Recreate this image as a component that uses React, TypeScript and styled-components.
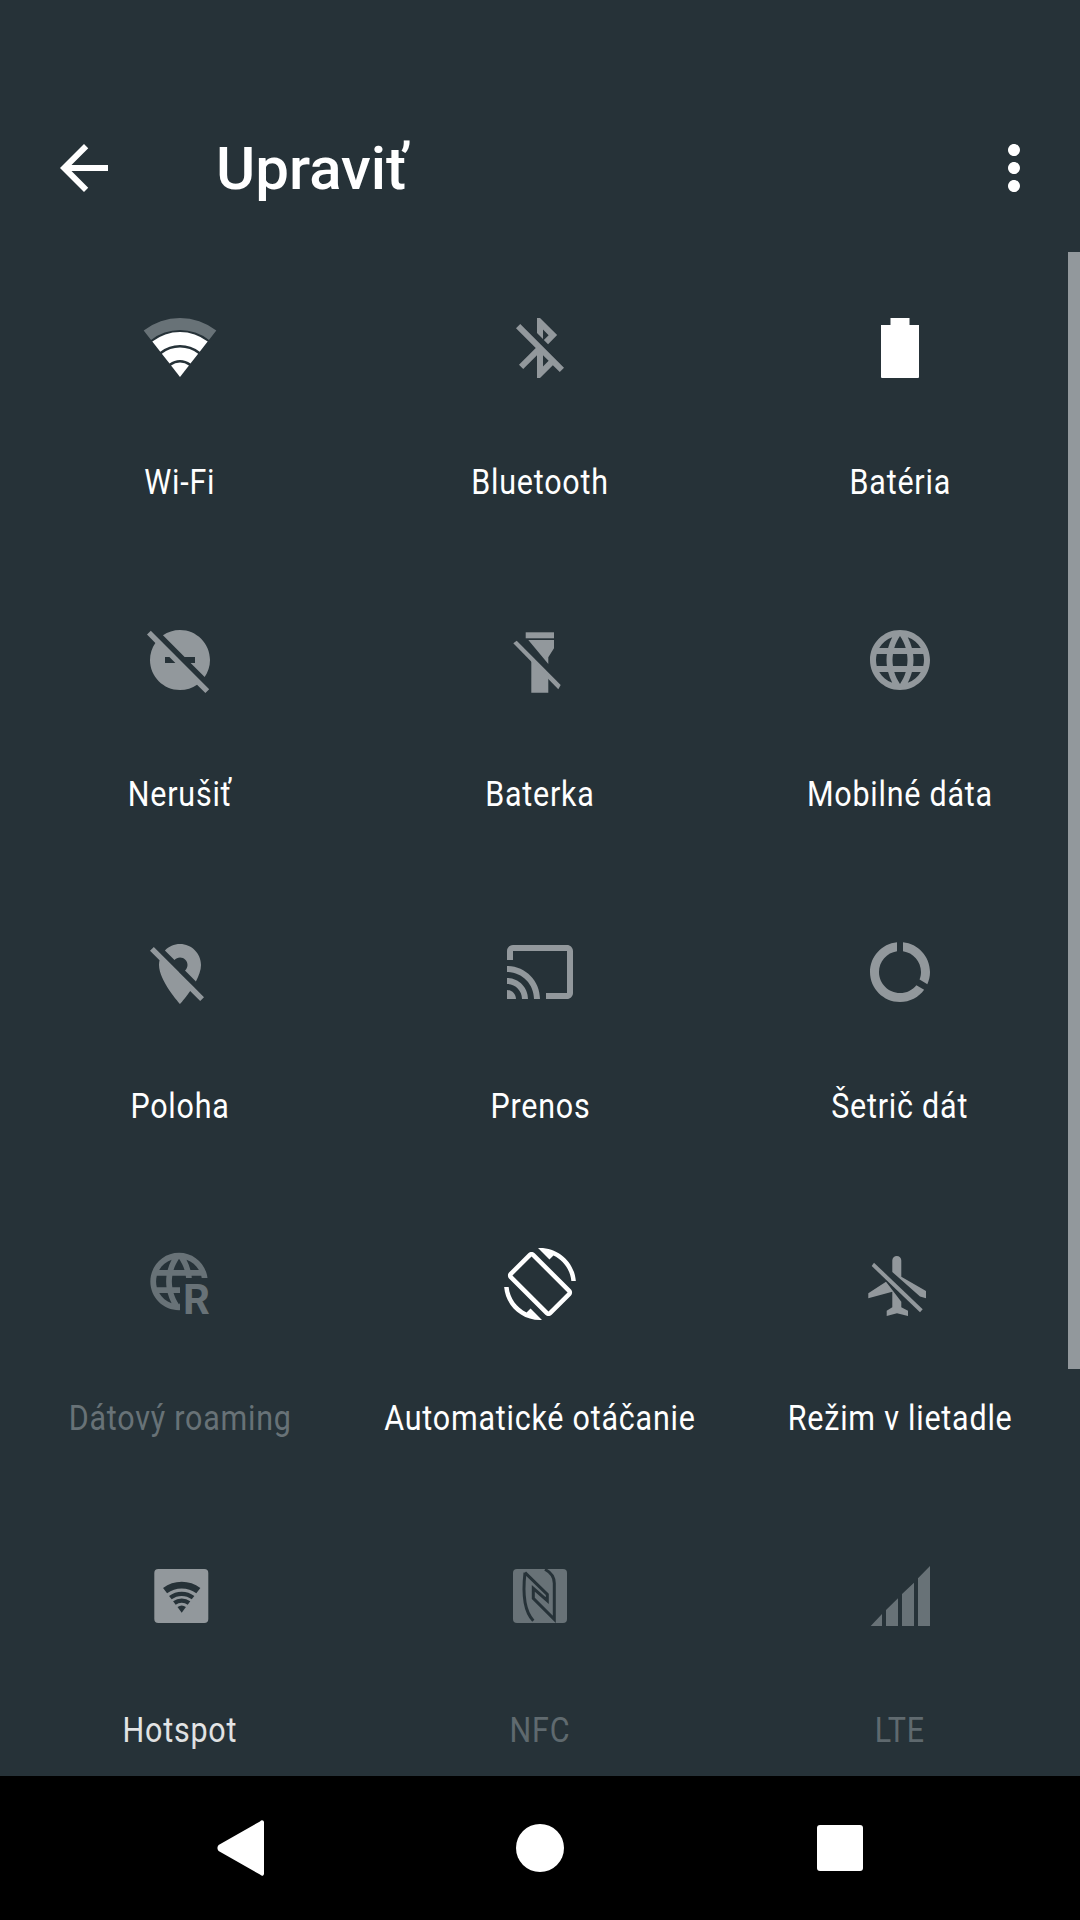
import React from 'react';
import styled, { createGlobalStyle } from 'styled-components';

const Global = createGlobalStyle`
  html, body { margin: 0; padding: 0; background: #263238; }
  * { box-sizing: border-box; }
`;

const Screen = styled.div`
  position: relative;
  width: 1080px;
  height: 1920px;
  display: flex;
  flex-direction: column;
  background: #263238;
  overflow: hidden;
  font-family: Roboto, "Noto Sans", sans-serif;
`;

const Toolbar = styled.header`
  flex: none;
  height: 252px;
  padding: 84px 30px 0 48px;
  display: flex;
  align-items: flex-start;
`;

const BarIcon = styled.svg`
  flex: none;
  width: 72px;
  height: 72px;
  margin-top: 48px;
  fill: #fff;
`;

const Title = styled.h1`
  flex: 1;
  margin: 49px 0 0 96px;
  color: #fff;
  font-size: 60px;
  line-height: 72px;
  font-weight: 500;
`;

const Tiles = styled.main`
  position: relative;
  flex: 1;
  min-height: 0;
  overflow: hidden;
  display: grid;
  grid-template-columns: repeat(3, 360px);
  grid-auto-rows: 312px;
  &::after {
    content: '';
    position: absolute;
    left: 0;
    right: 0;
    bottom: 0;
    height: 140px;
    background: linear-gradient(rgba(38, 50, 56, 0), rgba(38, 50, 56, 0.2));
  }
`;

const Tile = styled.div<{ $off?: boolean }>`
  display: flex;
  flex-direction: column;
  align-items: center;
  padding-top: 60px;
  color: ${(p) => (p.$off ? '#687277' : '#fff')};
`;

const TileIcon = styled.svg<{ $tone: string }>`
  flex: none;
  width: 72px;
  height: 72px;
  margin-bottom: 77px;
  overflow: visible;
  fill: ${(p) => p.$tone};
`;

const Label = styled.span`
  display: block;
  white-space: nowrap;
  font-size: 35px;
  line-height: 44px;
  letter-spacing: 0.9px;
  transform: scaleX(0.87);
`;

const ScrollThumb = styled.div`
  position: absolute;
  right: 0;
  top: 252px;
  width: 12px;
  height: 1117px;
  background: #92989c;
`;

const NavBar = styled.nav`
  flex: none;
  height: 144px;
  background: #000;
  display: grid;
  grid-template-columns: repeat(3, 300px);
  justify-content: center;
  align-items: center;
  position: relative;
  z-index: 1;
`;

const NavSlot = styled.div`
  display: flex;
  justify-content: center;
  align-items: center;
`;

const NavGlyph = styled.svg`
  width: 72px;
  height: 72px;
  fill: #fff;
`;

const WHITE = '#fff';
const GREY = '#92989c';
const DIM = '#687277';
const BG = '#263238';

function band(cx: number, cy: number, ro: number, ri: number, half: number) {
  const a = (half * Math.PI) / 180;
  const s = Math.sin(a);
  const c = Math.cos(a);
  const f = (n: number) => n.toFixed(2);
  const outer = `M${f(cx - ro * s)} ${f(cy - ro * c)}A${ro} ${ro} 0 0 1 ${f(cx + ro * s)} ${f(cy - ro * c)}`;
  if (ri <= 0) return `${outer}L${cx} ${cy}Z`;
  return `${outer}L${f(cx + ri * s)} ${f(cy - ri * c)}A${ri} ${ri} 0 0 0 ${f(cx - ri * s)} ${f(cy - ri * c)}Z`;
}

const GLOBE =
  'M11.99 2C6.47 2 2 6.48 2 12s4.47 10 9.99 10C17.52 22 22 17.52 22 12S17.52 2 11.99 2zm6.93 6h-2.95c-.32-1.25-.78-2.45-1.38-3.56 1.84.63 3.37 1.91 4.33 3.56zM12 4.04c.83 1.2 1.48 2.53 1.91 3.96h-3.82c.43-1.43 1.08-2.76 1.91-3.96zM4.26 14C4.1 13.36 4 12.69 4 12s.1-1.36.26-2h3.38c-.08.66-.14 1.32-.14 2 0 .68.06 1.34.14 2H4.26zm.82 2h2.95c.32 1.25.78 2.45 1.38 3.56-1.84-.63-3.37-1.9-4.33-3.56zm2.95-8H5.08c.96-1.66 2.49-2.93 4.33-3.56C8.81 5.55 8.35 6.75 8.03 8zM12 19.96c-.83-1.2-1.48-2.53-1.91-3.96h3.82c-.43 1.43-1.08 2.76-1.91 3.96zM14.34 14H9.66c-.09-.66-.16-1.32-.16-2 0-.68.07-1.35.16-2h4.68c.09.65.16 1.32.16 2 0 .68-.07 1.34-.16 2zm.25 5.56c.6-1.11 1.06-2.31 1.38-3.56h2.95c-.96 1.65-2.49 2.93-4.33 3.56zM16.36 14c.08-.66.14-1.32.14-2 0-.68-.06-1.34-.14-2h3.38c.16.64.26 1.31.26 2s-.1 1.36-.26 2h-3.38z';

const U = ({ d, y = 0, x = 0 }: { d: string; x?: number; y?: number }) => (
  <path d={d} transform={`translate(${x} ${y}) scale(3)`} fillRule="evenodd" />
);

type TileDef = { label: string; tone: string; off?: boolean; art: React.ReactNode };

const tiles: TileDef[] = [
  {
    label: 'Wi-Fi',
    tone: WHITE,
    art: (
      <>
        <path d={band(36, 65, 59, 47, 38)} fill="#687277" />
        <path d={band(36, 65, 45, 32, 38)} />
        <path d={band(36, 65, 29.5, 17, 38)} />
        <path d={band(36, 65, 14.5, 0, 38)} />
      </>
    ),
  },
  {
    label: 'Bluetooth',
    tone: GREY,
    art: (
      <U d="M13 5.83l1.88 1.88-1.6 1.6 1.41 1.41 3.02-3.02L12 2h-1v5.03l2 2v-3.2zM5.41 4L4 5.41 10.59 12 5 17.59 6.41 19 11 14.41V22h1l4.29-4.29 2.3 2.29L20 18.59 5.41 4zM13 18.17v-3.76l1.88 1.88L13 18.17z" />
    ),
  },
  {
    label: 'Batéria',
    tone: WHITE,
    art: <path d="M26.5 6h19v7H55v52a1 1 0 0 1-1 1H18a1 1 0 0 1-1-1V13h9.5z" />,
  },
  {
    label: 'Nerušiť',
    tone: GREY,
    art: (
      <U d="M17 11v2h-1.46l4.68 4.68C21.34 16.07 22 14.11 22 12c0-5.52-4.48-10-10-10-2.11 0-4.07.66-5.68 1.78L13.54 11H17zM2.27 2.27L1 3.54l2.78 2.78C2.66 7.93 2 9.89 2 12c0 5.52 4.48 10 10 10 2.11 0 4.07-.66 5.68-1.78L20.46 23l1.27-1.27L11 11 2.27 2.27zM7 13v-2h1.46l2 2H7z" />
    ),
  },
  {
    label: 'Baterka',
    tone: GREY,
    art: (
      <>
        <rect x="21.7" y="8.3" width="28.3" height="6" />
        <path d="M24.3 16H50v8.3l-5.7 9V40z" />
        <path d="M9.3 19.3l3.4-2.6L56.7 61l-2.4 4.3z" />
        <path d="M27.3 36v32.7h17V53.3z" />
      </>
    ),
  },
  { label: 'Mobilné dáta', tone: GREY, art: <U d={GLOBE} /> },
  {
    label: 'Poloha',
    tone: GREY,
    art: (
      <U
        y={2}
        d="M12 6.5c1.38 0 2.5 1.12 2.5 2.5 0 .74-.33 1.39-.83 1.85l3.63 3.63c.98-1.86 1.7-3.8 1.7-5.48 0-3.87-3.13-7-7-7-1.98 0-3.76.83-5.03 2.16l3.19 3.19c.46-.52 1.11-.85 1.84-.85zm4.37 9.6l-4.63-4.63-.11-.11L3.27 3 2 4.27l3.18 3.18C5.07 7.95 5 8.47 5 9c0 5.25 7 13 7 13s1.67-1.85 3.38-4.35L18.73 21 20 19.73l-3.63-3.63z"
      />
    ),
  },
  {
    label: 'Prenos',
    tone: GREY,
    art: (
      <U d="M21 3H3c-1.1 0-2 .9-2 2v3h2V5h18v14h-7v2h7c1.1 0 2-.9 2-2V5c0-1.1-.9-2-2-2zM1 18v3h3c0-1.66-1.34-3-3-3zm0-4v2c2.76 0 5 2.24 5 5h2c0-3.87-3.13-7-7-7zm0-4v2c4.97 0 9 4.03 9 9h2c0-6.08-4.93-11-11-11z" />
    ),
  },
  {
    label: 'Šetrič dát',
    tone: GREY,
    art: (
      <U d="M13 2.05v3.03c3.39.49 6 3.39 6 6.92 0 .9-.18 1.75-.48 2.54l2.6 1.53c.56-1.24.88-2.62.88-4.07 0-5.18-3.95-9.45-9-9.95zM12 19c-3.87 0-7-3.13-7-7 0-3.53 2.61-6.43 6-6.92V2.05c-5.06.5-9 4.76-9 9.95 0 5.52 4.47 10 9.99 10 3.31 0 6.24-1.61 8.06-4.09l-2.6-1.53C16.17 17.98 14.21 19 12 19z" />
    ),
  },
  {
    label: 'Dátový roaming',
    tone: DIM,
    off: true,
    art: (
      <>
        <path d={GLOBE} transform="translate(0.6 -0.9) scale(2.87)" fillRule="evenodd" />
        <rect x="36" y="30" width="36" height="42" fill={BG} />
        <text x="39" y="66" fontFamily="Roboto, sans-serif" fontWeight="700" fontSize="42">
          R
        </text>
      </>
    ),
  },
  {
    label: 'Automatické otáčanie',
    tone: WHITE,
    art: (
      <U d="M16.48 2.52c3.27 1.55 5.61 4.72 5.97 8.48h1.5C23.44 4.84 18.29 0 12 0l-.66.03 3.81 3.81 1.33-1.32zm-6.25-.77c-.59-.59-1.54-.59-2.12 0L1.75 8.11c-.59.59-.59 1.54 0 2.12l12.02 12.02c.59.59 1.54.59 2.12 0l6.36-6.36c.59-.59.59-1.54 0-2.12L10.23 1.75zm4.6 19.44L2.81 9.17l6.36-6.36 12.02 12.02-6.36 6.36zm-7.31.29C4.25 19.94 1.91 16.76 1.55 13H.05C.56 19.16 5.71 24 12 24l.66-.03-3.81-3.81-1.33 1.32z" />
    ),
  },
  {
    label: 'Režim v lietadle',
    tone: GREY,
    art: (
      <>
        <path d="M28.3 24V12.5a4.5 4.5 0 0 1 9 0v16.2L62 43v7.3l-6-1.8z" />
        <path d="M10 14.7L7.7 18L56 64.3l2.7-3z" />
        <path d="M22 33.7L4.3 45.3v5l24-6.6v15.6l-5.6 3.4V68L33 65.3 44 68v-5.3l-6.7-3.4v-5.6z" />
      </>
    ),
  },
  {
    label: 'Hotspot',
    tone: GREY,
    art: (
      <>
        <rect x="10.3" y="9" width="54" height="54" rx="4" />
        <g fill={BG}>
          <path d={band(37.7, 52.7, 31, 24.3, 37)} />
          <path d={band(37.7, 52.7, 21, 16.7, 37)} />
          <path d={band(37.7, 52.7, 14.3, 10, 37)} />
          <path d={band(37.7, 52.7, 7, 0, 37)} />
        </g>
      </>
    ),
  },
  {
    label: 'NFC',
    tone: DIM,
    off: true,
    art: (
      <>
        <rect x="9" y="9" width="54" height="54" rx="4" />
        <g fill="none" stroke={BG} strokeWidth="3">
          <path d="M21 12.700L43.300 34.300V40.700L29.300 28.300V38.300L50.300 59.300V23.300C50.300 17 46 12 41 9.300" />
          <path d="M21 12.700C19 30 19 50 29.300 60.700" />
        </g>
      </>
    ),
  },
  {
    label: 'LTE',
    tone: DIM,
    off: true,
    art: <path d="M6.7 66H18V54zM22 66h12V38.3L22 50zM38 66h12V22.7L38 34zM54 66h12V6L54 18.3z" />,
  },
];

export default function App() {
  return (
    <Screen>
      <Global />
      <Toolbar>
        <BarIcon viewBox="0 0 24 24">
          <path d="M20 11H7.83l5.59-5.59L12 4l-8 8 8 8 1.41-1.41L7.83 13H20v-2z" />
        </BarIcon>
        <Title>Upraviť</Title>
        <BarIcon viewBox="0 0 24 24">
          <path d="M12 8c1.1 0 2-.9 2-2s-.9-2-2-2-2 .9-2 2 .9 2 2 2zm0 2c-1.1 0-2 .9-2 2s.9 2 2 2 2-.9 2-2-.9-2-2-2zm0 6c-1.1 0-2 .9-2 2s.9 2 2 2 2-.9 2-2-.9-2-2-2z" />
        </BarIcon>
      </Toolbar>
      <Tiles>
        {tiles.map((t) => (
          <Tile key={t.label} $off={t.off}>
            <TileIcon viewBox="0 0 72 72" $tone={t.tone}>
              {t.art}
            </TileIcon>
            <Label>{t.label}</Label>
          </Tile>
        ))}
      </Tiles>
      <ScrollThumb />
      <NavBar>
        <NavSlot>
          <NavGlyph viewBox="0 0 72 72">
            <path d="M56 9.400c1.600-2 4-1.200 4 1.200v50.800c0 2.400-2.400 3.200-4 1.200L14.600 39c-1.600-1.800-1.600-4.200 0-6z" />
          </NavGlyph>
        </NavSlot>
        <NavSlot>
          <NavGlyph viewBox="0 0 72 72">
            <circle cx="36" cy="36" r="24" />
          </NavGlyph>
        </NavSlot>
        <NavSlot>
          <NavGlyph viewBox="0 0 72 72">
            <rect x="13" y="13" width="46" height="46" rx="3" />
          </NavGlyph>
        </NavSlot>
      </NavBar>
    </Screen>
  );
}
